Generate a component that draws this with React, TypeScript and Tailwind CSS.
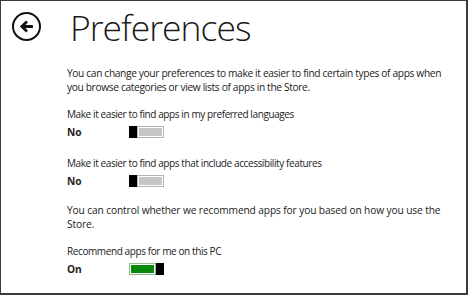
import React from "react";

const Toggle = ({ on }: { on: boolean }) => (
  <div className="flex h-[12px] w-[35px] bg-white">
    {on ? (
      <>
        <div className="flex-1 border border-[#8fbf8f] p-px">
          <div className="h-full w-full bg-[#0a8a0a]" />
        </div>
        <div className="h-full w-[8px] bg-black" />
      </>
    ) : (
      <>
        <div className="h-full w-[8px] bg-black" />
        <div className="flex-1 border border-[#b4b4b4] p-px">
          <div className="h-full w-full bg-[#c6c6c6]" />
        </div>
      </>
    )}
  </div>
);

const Setting = ({ label, value, on }: { label: string; value: string; on: boolean }) => (
  <div className="flex flex-col">
    <p className="text-[10px] leading-[14px] tracking-[-0.4px]">{label}</p>
    <div className="mt-[4px] flex h-[14px] items-center">
      <span className="w-[62px] font-bold leading-[14px]">{value}</span>
      <Toggle on={on} />
    </div>
  </div>
);

export default function App() {
  return (
    <div
      className="h-[295px] w-[468px] overflow-hidden border-t border-l border-r-2 border-b-2 border-[#3a3a3a] bg-white text-[#1a1a1a]"
      style={{ fontFamily: '"Open Sans", "Noto Sans", sans-serif' }}
    >
      <div className="flex items-start pt-[11px]">
        <div className="ml-[11px] flex h-[29px] w-[29px] items-center justify-center rounded-full border-2 border-[#111]">
          <svg width="17" height="17" viewBox="0 0 16 16">
            <path d="M14 8H4M8.5 3.2L3.6 8l4.9 4.8" fill="none" stroke="#111" strokeWidth="2.6" />
          </svg>
        </div>
        <h1 className="ml-[29px] mt-[-9px] text-[35.5px] font-light leading-[48px] tracking-[-1px]">Preferences</h1>
      </div>
      <div className="ml-[66px] mt-[16px] flex flex-col whitespace-nowrap text-[10.2px] text-[#222]">
        <p className="leading-[13.5px] tracking-[-0.35px]">
          You can change your preferences to make it easier to find certain types of apps when
          <br />
          you browse categories or view lists of apps in the Store.
        </p>
        <div className="mt-[13px]">
          <Setting label="Make it easier to find apps in my preferred languages" value="No" on={false} />
        </div>
        <div className="mt-[17px]">
          <Setting label="Make it easier to find apps that include accessibility features" value="No" on={false} />
        </div>
        <p className="mt-[16px] leading-[13.5px] tracking-[-0.12px]">
          You can control whether we recommend apps for you based on how you use the
          <br />
          Store.
        </p>
        <div className="mt-[13px]">
          <Setting label="Recommend apps for me on this PC" value="On" on={true} />
        </div>
      </div>
    </div>
  );
}
